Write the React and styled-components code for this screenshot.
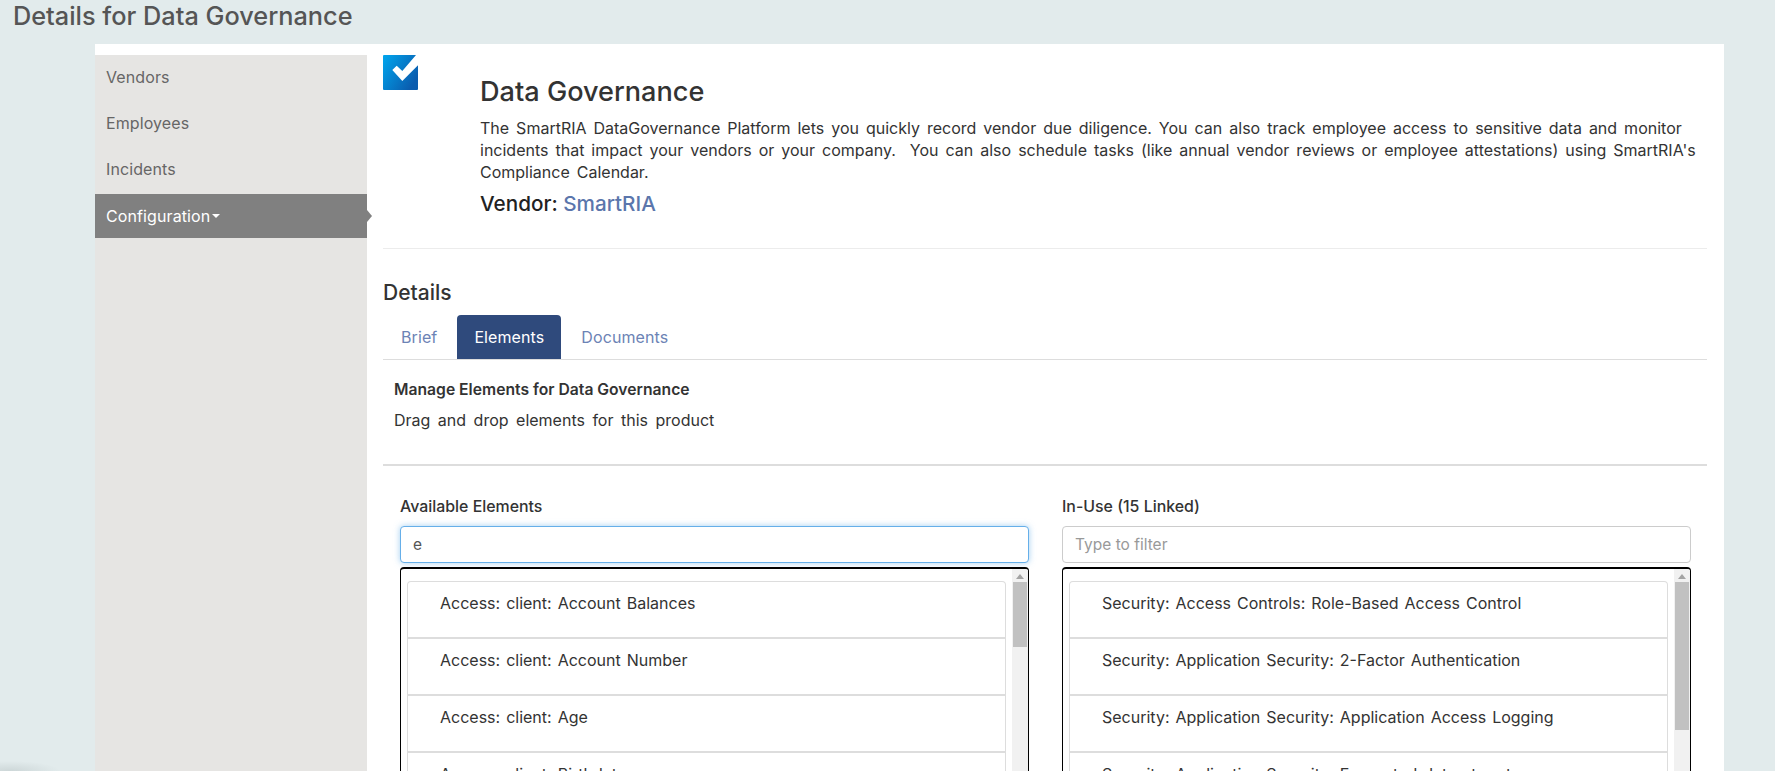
import React from 'react';
import styled, { createGlobalStyle } from 'styled-components';

const GlobalStyle = createGlobalStyle`
  html, body {
    margin: 0;
    height: 100%;
    overflow: hidden;
    background: #e2ebec;
    font-family: Inter, "Liberation Sans", sans-serif;
  }
  * { box-sizing: border-box; }
`;

const Page = styled.div`
  height: 771px;
  overflow: hidden;
  background: radial-gradient(ellipse 50px 10px at 10px 100%, #cdd7d8, transparent);
`;

const PageTitle = styled.h1`
  margin: 0;
  height: 44px;
  padding: 0 0 0 13px;
  font-size: 25.3px;
  line-height: 32px;
  font-weight: 500;
  color: #555;
`;

const Panel = styled.div`
  display: flex;
  align-items: flex-start;
  margin: 0 51px 0 95px;
  padding-top: 11px;
  height: 727px;
  background: #fff;
`;

const SideNav = styled.nav`
  flex: 0 0 272px;
  height: 100%;
  background: #e6e5e3;
`;

const NavItem = styled.a`
  position: relative;
  display: flex;
  align-items: center;
  height: ${(p) => (p.$active ? '44px' : '46.3px')};
  padding: 0 0 ${(p) => (p.$active ? '0' : '3px')} 11px;
  font-size: 16px;
  letter-spacing: 0.1px;
  color: ${(p) => (p.$active ? '#fff' : '#666')};
  background: ${(p) => (p.$active ? '#808080' : 'transparent')};

  ${(p) =>
    p.$active &&
    `&::after {
      content: '';
      position: absolute;
      right: -5px;
      top: 50%;
      margin-top: -6px;
      border-left: 5px solid #808080;
      border-top: 6px solid transparent;
      border-bottom: 6px solid transparent;
    }`}
`;

const Caret = styled.span`
  margin-left: 2px;
  border-top: 4px solid #fff;
  border-left: 4.5px solid transparent;
  border-right: 4.5px solid transparent;
`;

const Main = styled.main`
  flex: 1;
  min-width: 0;
  padding: 0 17px 0 16px;
`;

const ProductHead = styled.header`
  display: flex;
  height: 194px;
  border-bottom: 1px solid #ececec;
`;

const ProductIcon = styled.svg`
  flex: 0 0 36px;
  width: 36px;
  height: 36px;
`;

const ProductInfo = styled.div`
  flex: 1;
  min-width: 0;
  margin-left: 61px;
  padding-top: 20px;
  color: #333;
`;

const ProductName = styled.h2`
  margin: 0 0 8px;
  font-size: 27.1px;
  line-height: 34px;
  font-weight: 500;
  color: #333;
`;

const ProductText = styled.p`
  margin: 0 0 8px;
  font-size: 16px;
  line-height: 22px;
  word-spacing: 2.5px;
  color: #333;
`;

const VendorLine = styled.div`
  font-size: 20.7px;
  line-height: 26px;
  font-weight: 500;
  color: #222;

  a {
    color: #5b76ac;
  }
`;

const SectionTitle = styled.h3`
  margin: 31px 0 9px;
  font-size: 21px;
  line-height: 26px;
  font-weight: 500;
  color: #333;
`;

const TabBar = styled.div`
  display: flex;
  height: 45px;
  padding-left: 1px;
  border-bottom: 1px solid #ddd;
`;

const Tab = styled.a`
  display: flex;
  align-items: center;
  height: 44px;
  margin-right: 3px;
  padding: 0 17px;
  font-size: 16px;
  letter-spacing: 0.1px;
  color: ${(p) => (p.$active ? '#fff' : '#6c83b5')};
  background: ${(p) => (p.$active ? '#2f4a7c' : 'transparent')};
  border-radius: 4px 4px 0 0;
`;

const ManageBlock = styled.div`
  padding: 18px 11px 0;
  height: 106px;
  border-bottom: 2px solid #ddd;
  color: #333;
`;

const ManageTitle = styled.div`
  font-size: 15.7px;
  line-height: 24px;
  font-weight: 600;
`;

const ManageText = styled.div`
  margin-top: 6px;
  font-size: 16px;
  line-height: 24px;
  word-spacing: 3px;
`;

const Columns = styled.div`
  display: flex;
  gap: 33px;
  padding: 31px 16px 0 17px;
`;

const Column = styled.section`
  flex: 1;
  min-width: 0;
`;

const ColumnLabel = styled.label`
  display: block;
  height: 20px;
  font-size: 15.9px;
  line-height: 20px;
  font-weight: 500;
  color: #333;
`;

const FilterInput = styled.input`
  display: block;
  width: 100%;
  height: 37px;
  margin-top: 9px;
  padding: 0 12px;
  font-family: inherit;
  font-size: 15.5px;
  color: #555;
  background: #fff;
  border: 1px solid ${(p) => (p.$focused ? '#66afe9' : '#ccc')};
  border-radius: 4px;
  outline: none;
  box-shadow: ${(p) => (p.$focused ? '0 0 6px rgba(102, 175, 233, 0.6)' : 'none')};

  &::placeholder {
    color: #999;
  }
`;

const ListBox = styled.div`
  display: flex;
  height: 242px;
  margin-top: 4px;
  border: 1px solid #000;
  border-top-width: 2px;
  border-bottom: 0;
  border-radius: 4px 4px 0 0;
  overflow: hidden;
`;

const ListItems = styled.ul`
  flex: 1;
  min-width: 0;
  margin: 0;
  padding: 12px 6px 0 6px;
  list-style: none;
`;

const ListItem = styled.li`
  height: ${(p) => (p.$first ? '58px' : '57px')};
  padding: 10px 0 0 32px;
  font-size: 16px;
  line-height: 22px;
  word-spacing: 1.5px;
  color: #333;
  background: #fff;
  border: 1px solid #ddd;
  border-top-width: ${(p) => (p.$first ? '1px' : '0')};
  border-bottom-width: 2px;
  border-radius: ${(p) => (p.$first ? '4px 4px 0 0' : '0')};
`;

const ScrollTrack = styled.div`
  flex: 0 0 16px;
  padding: 13px 1px 0;
  background: #f1f1f1;

  &::before {
    content: '';
    position: relative;
    display: block;
    width: 0;
    margin: -8px auto 3px;
    border-bottom: 5px solid #a3a3a3;
    border-left: 4px solid transparent;
    border-right: 4px solid transparent;
  }
`;

const ScrollThumb = styled.div`
  height: ${(p) => p.$size}px;
  background: #c1c1c1;
`;

const availableElements = [
  'Access: client: Account Balances',
  'Access: client: Account Number',
  'Access: client: Age',
  'Access: client: Birthdate',
];

const inUseElements = [
  'Security: Access Controls: Role-Based Access Control',
  'Security: Application Security: 2-Factor Authentication',
  'Security: Application Security: Application Access Logging',
  'Security: Application Security: Encrypted data at rest',
];

function ElementList({ items, thumbSize }) {
  return (
    <ListBox>
      <ListItems>
        {items.map((item, i) => (
          <ListItem key={item} $first={i === 0}>
            {item}
          </ListItem>
        ))}
      </ListItems>
      <ScrollTrack>
        <ScrollThumb $size={thumbSize} />
      </ScrollTrack>
    </ListBox>
  );
}

export default function App() {
  return (
    <Page>
      <GlobalStyle />
      <PageTitle>Details for Data Governance</PageTitle>
      <Panel>
        <SideNav>
          <NavItem>Vendors</NavItem>
          <NavItem>Employees</NavItem>
          <NavItem>Incidents</NavItem>
          <NavItem $active>
            Configuration
            <Caret />
          </NavItem>
        </SideNav>
        <Main>
          <ProductHead>
            <ProductIcon viewBox="0 0 36 36">
              <defs>
                <linearGradient id="boxBlue" x1="0" y1="0" x2="1" y2="0.6">
                  <stop offset="0" stopColor="#00a6ee" />
                  <stop offset="1" stopColor="#0a5cae" />
                </linearGradient>
              </defs>
              <rect width="35" height="35" rx="1" fill="url(#boxBlue)" />
              <path d="M9.3 15L13.7 10.7L19.3 16L33 0H36V9.3L19.3 26Z" fill="#fff" />
            </ProductIcon>
            <ProductInfo>
              <ProductName>Data Governance</ProductName>
              <ProductText>
                The SmartRIA DataGovernance Platform lets you quickly record vendor due diligence. You can also track
                employee access to sensitive data and monitor incidents that impact your vendors or your company.&nbsp;
                You can also schedule tasks (like annual vendor reviews or employee attestations) using SmartRIA's
                Compliance Calendar.
              </ProductText>
              <VendorLine>
                Vendor: <a>SmartRIA</a>
              </VendorLine>
            </ProductInfo>
          </ProductHead>
          <SectionTitle>Details</SectionTitle>
          <TabBar>
            <Tab>Brief</Tab>
            <Tab $active>Elements</Tab>
            <Tab>Documents</Tab>
          </TabBar>
          <ManageBlock>
            <ManageTitle>Manage Elements for Data Governance</ManageTitle>
            <ManageText>Drag and drop elements for this product</ManageText>
          </ManageBlock>
          <Columns>
            <Column>
              <ColumnLabel>Available Elements</ColumnLabel>
              <FilterInput $focused defaultValue="e" />
              <ElementList items={availableElements} thumbSize={65} />
            </Column>
            <Column>
              <ColumnLabel>In-Use (15 Linked)</ColumnLabel>
              <FilterInput placeholder="Type to filter" />
              <ElementList items={inUseElements} thumbSize={148} />
            </Column>
          </Columns>
        </Main>
      </Panel>
    </Page>
  );
}
